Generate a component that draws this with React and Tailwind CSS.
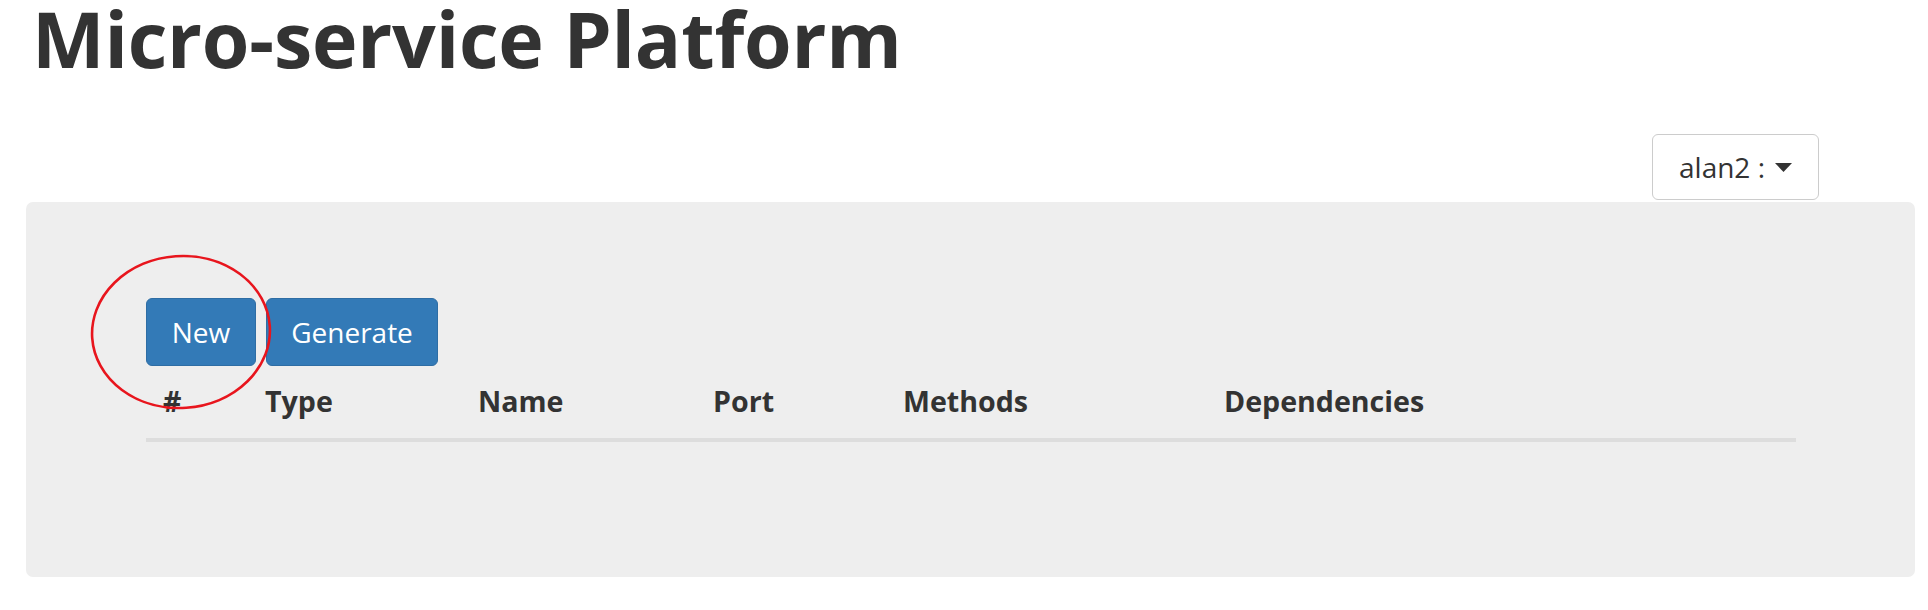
import React from "react";

export default function App() {
  const cols = [
    { label: "#", w: "w-[102px]" },
    { label: "Type", w: "w-[213px]" },
    { label: "Name", w: "w-[235px]" },
    { label: "Port", w: "w-[190px]" },
    { label: "Methods", w: "w-[321px]" },
    { label: "Dependencies", w: "flex-1" },
  ];
  return (
    <div
      className="relative w-[1928px] h-[610px] bg-white text-[#333] overflow-hidden"
      style={{ fontFamily: '"Open Sans", "Noto Sans", sans-serif' }}
    >
      <h1 className="ml-[32px] pt-[2px] text-[77px] leading-[74px] font-bold tracking-[-0.2px]">
        Micro-service Platform
      </h1>
      <div className="flex justify-end mr-[109px] mt-[58px]">
        <button className="h-[66px] w-[167px] flex items-center justify-center gap-[10px] border border-[#ccc] rounded-[6px] bg-white text-[28px] text-[#333]">
          <span>alan2 :</span>
          <svg width="17" height="9" viewBox="0 0 17 9">
            <path d="M0 0 L17 0 L8.5 9 Z" fill="#333" />
          </svg>
        </button>
      </div>
      <div className="ml-[26px] mt-[2px] w-[1889px] h-[375px] bg-[#eee] rounded-[7px] pt-[96px] pl-[120px]">
        <div className="flex gap-[10px]">
          <button className="h-[68px] w-[110px] rounded-[6px] bg-[#337ab7] border border-[#2e6da4] text-white text-[28px]">
            New
          </button>
          <button className="h-[68px] w-[172px] rounded-[6px] bg-[#337ab7] border border-[#2e6da4] text-white text-[28px]">
            Generate
          </button>
        </div>
        <div className="w-[1650px] mt-[15px] flex border-b-4 border-[#ddd] pb-[17px]">
          {cols.map((c) => (
            <div
              key={c.label}
              className={`${c.w} pl-[17px] text-[28.6px] leading-[40px] font-bold`}
            >
              {c.label}
            </div>
          ))}
        </div>
      </div>
      <svg
        className="absolute left-0 top-0 pointer-events-none"
        width="1928"
        height="610"
        viewBox="0 0 1928 610"
      >
        <ellipse
          cx="181"
          cy="332"
          rx="89"
          ry="76"
          transform="rotate(-4 181 332)"
          fill="none"
          stroke="#e8151d"
          strokeWidth="2.6"
        />
      </svg>
    </div>
  );
}
